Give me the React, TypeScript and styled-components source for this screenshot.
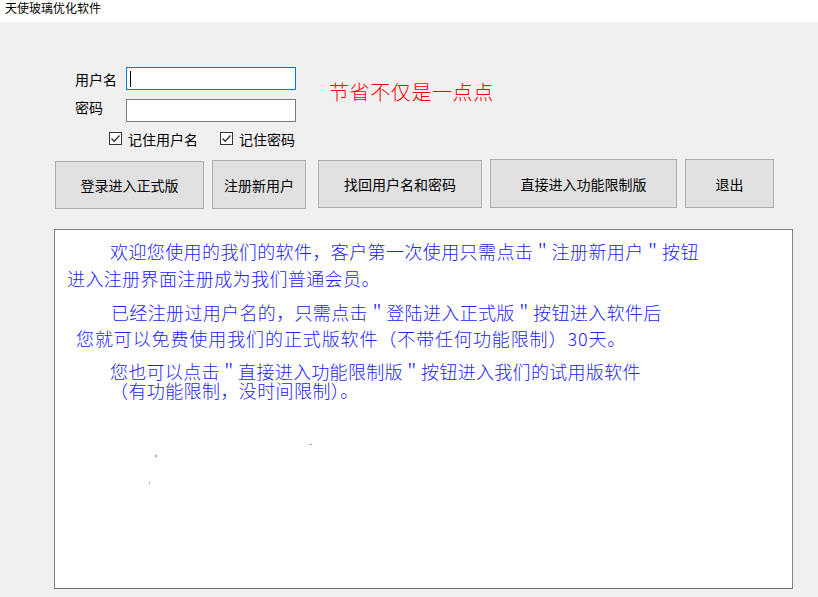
import React from "react";
import styled, { createGlobalStyle } from "styled-components";

const Global = createGlobalStyle`
  html, body {
    margin: 0;
    padding: 0;
    background: #f0f0f0;
    overflow: hidden;
  }
  body {
    font-family: "Noto Sans CJK SC", "Noto Sans", sans-serif;
  }
  * { box-sizing: border-box; }
`;

const Window = styled.div`
  width: 818px;
  height: 597px;
  background: #f0f0f0;
  display: flex;
  flex-direction: column;
  position: relative;
`;

const TitleBar = styled.div`
  height: 22px;
  background: #ffffff;
  padding: 1px 0 0 5px;
  font-size: 12px;
  line-height: 14px;
  color: #000;
`;

const Client = styled.div`
  padding-top: 45px;
  display: flex;
  flex-direction: column;
`;

const TopSection = styled.div`
  display: flex;
  align-items: flex-start;
  padding-left: 75px;
`;

const FormGrid = styled.div`
  display: grid;
  grid-template-columns: 51px 170px;
  grid-template-rows: 23px 23px 14px;
  row-gap: 9px;
`;

const Label = styled.div<{ $top?: boolean }>`
  font-size: 14px;
  line-height: 14px;
  color: #000;
  align-self: ${(p) => (p.$top ? "start" : "center")};
  margin-top: ${(p) => (p.$top ? "1px" : "0")};
`;

const TextInput = styled.div<{ $focused?: boolean }>`
  background: #fff;
  border: 1px solid ${(p) => (p.$focused ? "#0078d7" : "#7a7a7a")};
  display: flex;
  align-items: center;
  padding-left: 3px;
`;

const Caret = styled.span`
  width: 1px;
  height: 16px;
  background: #000;
`;

const CheckRow = styled.div`
  grid-column: 1 / -1;
  display: flex;
  align-items: center;
  gap: 22px;
  padding-left: 34px;
  margin-top: 1px;
`;

const CheckItem = styled.label`
  display: flex;
  align-items: center;
  gap: 6px;
  font-size: 14px;
  line-height: 14px;
  color: #000;
`;

const Box = styled.span`
  width: 13px;
  height: 13px;
  border: 1px solid #333;
  background: #fff;
  display: flex;
  align-items: center;
  justify-content: center;
`;

const Slogan = styled.div`
  margin-left: 33px;
  margin-top: 15px;
  font-size: 20px;
  line-height: 20px;
  font-weight: 300;
  color: #ff0000;
  letter-spacing: 0.6px;
`;

const ButtonRow = styled.div`
  display: flex;
  align-items: flex-start;
  gap: 8px;
  padding-left: 55px;
  margin-top: 14px;
`;

const Button = styled.button<{ $w: number; $h: number; $top: number; $ml?: number }>`
  width: ${(p) => p.$w}px;
  height: ${(p) => p.$h}px;
  margin-top: ${(p) => p.$top}px;
  margin-left: ${(p) => p.$ml ?? 0}px;
  background: #e1e1e1;
  border: 1px solid #adadad;
  border-radius: 0;
  padding: 0;
  font-family: "Noto Sans CJK SC", sans-serif;
  font-size: 14px;
  color: #000;
`;

const TextPanel = styled.div`
  margin: 20px 0 0 54px;
  width: 739px;
  height: 360px;
  background: #fff;
  border: 1px solid #828282;
  border-bottom-color: #6e6e6e;
  padding-top: 13px;
  position: relative;
`;

const TextLine = styled.div<{ $indent: number; $gap: number; $ls: number }>`
  padding-left: ${(p) => p.$indent}px;
  margin-top: ${(p) => p.$gap}px;
  font-size: 18px;
  line-height: 17px;
  font-weight: 300;
  letter-spacing: ${(p) => p.$ls}px;
  color: #2222ff;
  white-space: nowrap;
`;

const Speck = styled.span<{ $x: number; $y: number; $w: number; $h: number }>`
  position: absolute;
  left: ${(p) => p.$x}px;
  top: ${(p) => p.$y}px;
  width: ${(p) => p.$w}px;
  height: ${(p) => p.$h}px;
  background: #9aa0ff;
`;

const lines: { text: string; indent: number; gap: number; ls: number }[] = [
  { text: "欢迎您使用的我们的软件，客户第一次使用只需点击＂注册新用户＂按钮", indent: 55, gap: 0, ls: 0.4 },
  { text: "进入注册界面注册成为我们普通会员。", indent: 12, gap: 10, ls: 0.4 },
  { text: "已经注册过用户名的，只需点击＂登陆进入正式版＂按钮进入软件后", indent: 56, gap: 17, ls: 0.35 },
  { text: "您就可以免费使用我们的正式版软件（不带任何功能限制）30天。", indent: 21, gap: 9, ls: 0.9 },
  { text: "您也可以点击＂直接进入功能限制版＂按钮进入我们的试用版软件", indent: 55, gap: 16, ls: 0.3 },
  { text: "（有功能限制，没时间限制）。", indent: 55, gap: 2, ls: 0.4 },
];

const Check = () => (
  <svg width="11" height="11" viewBox="0 0 11 11">
    <path d="M1.5 5.5 L4.2 8.2 L9.5 2.5" fill="none" stroke="#333" strokeWidth="1.4" />
  </svg>
);

export default function App() {
  return (
    <>
      <Global />
      <Window>
        <TitleBar>天使玻璃优化软件</TitleBar>
        <Client>
          <TopSection>
            <FormGrid>
              <Label>用户名</Label>
              <TextInput $focused>
                <Caret />
              </TextInput>
              <Label $top>密码</Label>
              <TextInput />
              <CheckRow>
                <CheckItem>
                  <Box>
                    <Check />
                  </Box>
                  记住用户名
                </CheckItem>
                <CheckItem>
                  <Box>
                    <Check />
                  </Box>
                  记住密码
                </CheckItem>
              </CheckRow>
            </FormGrid>
            <Slogan>节省不仅是一点点</Slogan>
          </TopSection>
          <ButtonRow>
            <Button $w={149} $h={48} $top={2}>登录进入正式版</Button>
            <Button $w={94} $h={49} $top={1}>注册新用户</Button>
            <Button $w={164} $h={48} $top={1} $ml={4}>找回用户名和密码</Button>
            <Button $w={187} $h={49} $top={0}>直接进入功能限制版</Button>
            <Button $w={89} $h={49} $top={0}>退出</Button>
          </ButtonRow>
          <TextPanel>
            {lines.map((l, i) => (
              <TextLine key={i} $indent={l.indent} $gap={l.gap} $ls={l.ls}>
                {l.text}
              </TextLine>
            ))}
            <Speck $x={100} $y={225} $w={2} $h={2} />
            <Speck $x={254} $y={214} $w={3} $h={1} />
            <Speck $x={94} $y={252} $w={1} $h={2} />
          </TextPanel>
        </Client>
      </Window>
    </>
  );
}
